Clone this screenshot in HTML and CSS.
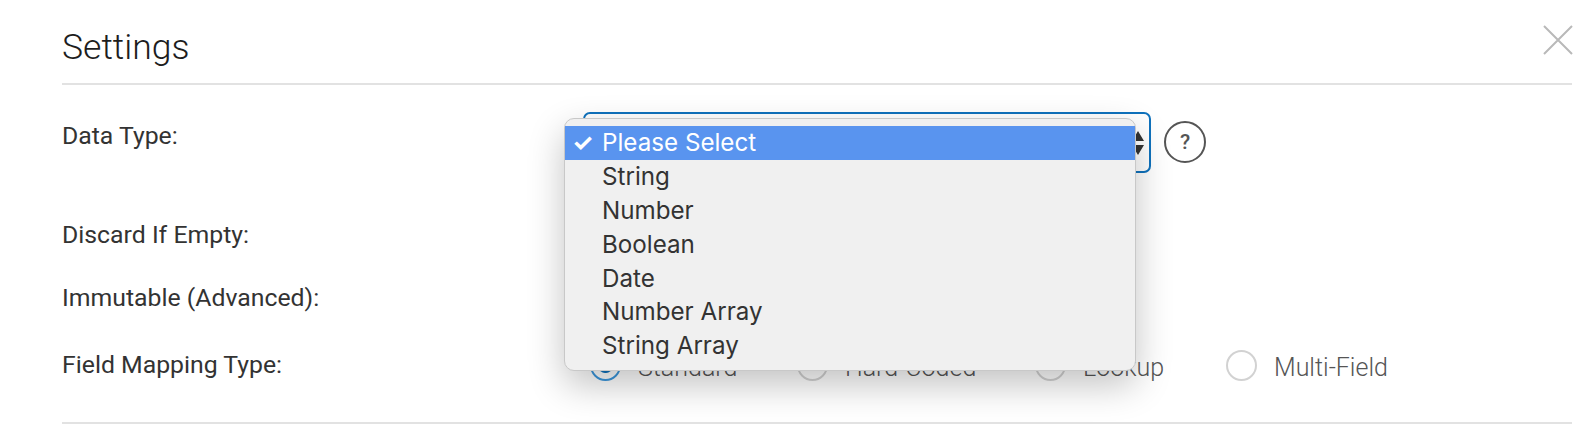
FILE: index.html
```html
<!DOCTYPE html>
<html lang="en">
<head>
<meta charset="utf-8">
<title>Settings</title>
<link rel="stylesheet" href="styles.css">
</head>
<body>
<main class="panel">
  <header class="head">
    <h1 class="title">Settings</h1>
    <button class="close" aria-label="Close">
      <svg width="30" height="30" viewBox="0 0 30 30"><path d="M1 1L29 29M29 1L1 29" stroke="#b9b9b9" stroke-width="2" fill="none"/></svg>
    </button>
  </header>
  <section class="form">
    <div class="row row-type">
      <div class="label">Data Type:</div>
      <div class="field">
        <div class="select">
          <svg class="arrows" width="14" height="28" viewBox="0 0 14 28"><path d="M7 2L13 12H1ZM1 16H13L7 26Z" fill="#333"/></svg>
          <ul class="menu">
            <li class="opt active"><span class="check">✓</span>Please Select</li>
            <li class="opt">String</li>
            <li class="opt">Number</li>
            <li class="opt">Boolean</li>
            <li class="opt">Date</li>
            <li class="opt">Number Array</li>
            <li class="opt">String Array</li>
          </ul>
        </div>
        <div class="help">?</div>
      </div>
    </div>
    <div class="row row-discard"><div class="label">Discard If Empty:</div></div>
    <div class="row row-immutable"><div class="label">Immutable (Advanced):</div></div>
    <div class="row row-map">
      <div class="label">Field Mapping Type:</div>
      <div class="radios">
        <div class="radio r1"><span class="dot on"></span><span class="radio-text">Standard</span></div>
        <div class="radio r2"><span class="dot"></span><span class="radio-text">Hard-Coded</span></div>
        <div class="radio r3"><span class="dot"></span><span class="radio-text">Lookup</span></div>
        <div class="radio"><span class="dot"></span><span class="radio-text">Multi-Field</span></div>
      </div>
    </div>
  </section>
</main>
</body>
</html>
```
FILE: styles.css
```css
* { box-sizing: border-box; }
html, body { margin: 0; height: 100%; background: #fff; overflow: hidden; }
body { font-family: Roboto, "Liberation Sans", sans-serif; color: #222; }
.panel { padding: 0 22px 0 62px; }
.head {
  height: 85px;
  border-bottom: 2px solid #e2e2e2;
  display: flex;
  justify-content: space-between;
  align-items: flex-start;
}
.title { margin: 25px 0 0; font-size: 35.5px; line-height: 44px; font-weight: 300; color: #1d1d1d; }
.close { margin: 25px -1px 0 0; padding: 0; border: 0; background: none; display: block; line-height: 0; }
.form { height: 339px; border-bottom: 2px solid #e2e2e2; }
.row { display: flex; font-size: 24.8px; line-height: 26px; font-weight: 400; }
.label { width: 521px; flex: none; color: #333; }
.row-type { height: 122px; padding-top: 38px; }
.row-discard { height: 65px; padding-top: 15px; }
.row-immutable { height: 67px; padding-top: 13px; }
.row-map { padding-top: 13px; }
.field { display: flex; align-items: flex-start; gap: 13px; margin-top: -11px; height: 61px; }
.select {
  position: relative;
  width: 568px;
  height: 61px;
  border: 2px solid #0f72bd;
  border-radius: 7px;
}
.arrows { position: absolute; right: 4px; top: 15px; }
.menu {
  position: absolute;
  left: -21px;
  top: 4px;
  z-index: 5;
  width: 572px;
  height: 253px;
  margin: 0;
  padding: 7px 0;
  list-style: none;
  background: #f0f0f0;
  border: 1px solid #c8c8c8;
  border-radius: 10px;
  box-shadow: 0 14px 36px rgba(0, 0, 0, .24);
  font-family: Inter, Roboto, sans-serif;
  font-size: 24.2px;
  color: #333;
}
.opt { position: relative; height: 33.9px; line-height: 33.5px; padding-left: 37px; }
.active { background: #5994ef; color: #fff; }
.check { position: absolute; left: 7px; font-size: 24px; font-weight: 700; }
.help {
  width: 42px;
  height: 42px;
  margin-top: 9px;
  border: 2px solid #555;
  border-radius: 50%;
  display: flex;
  align-items: center;
  justify-content: center;
  font-size: 21px;
  font-weight: 500;
  color: #555;
}
.radios { display: flex; align-items: center; margin-top: -3px; font-weight: 300; color: #555; font-size: 25px; height: 32px; margin-left: 7px; }
.radio { display: flex; align-items: center; gap: 17px; }
.radio-text { margin-top: 5px; }
.r1 { width: 207px; }
.r2 { width: 238px; }
.r3 { width: 191px; }
.dot { width: 31px; height: 31px; border: 2px solid #d2d2d2; border-radius: 50%; background: #fff; flex: none; }
.dot.on { border-color: #3b97dd; background: radial-gradient(circle, #0f72bd 0 7px, #fff 8px); }
```
